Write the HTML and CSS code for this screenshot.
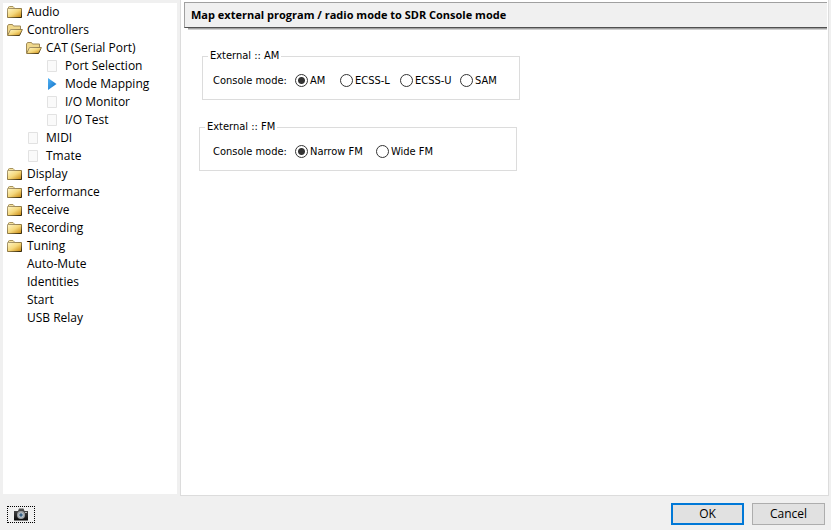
FILE: index.html
```
<!DOCTYPE html>
<html lang="en">
<head>
    <meta charset="UTF-8">
    <meta name="viewport" content="width=device-width, initial-scale=1.0">
    <title>Options</title>
    <link rel="stylesheet" href="styles.css">
</head>
<body>
    <!-- Shared icons -->
    <svg class="sprite" aria-hidden="true">
        <defs>
            <linearGradient id="gold" x1="0" y1="0" x2="1" y2="1">
                <stop offset="0" stop-color="#fff6c8"/>
                <stop offset="0.5" stop-color="#f5d87c"/>
                <stop offset="1" stop-color="#c8860c"/>
            </linearGradient>
            <linearGradient id="edge" x1="0" y1="0" x2="1" y2="1">
                <stop offset="0" stop-color="#b0a078"/>
                <stop offset="0.6" stop-color="#8a733c"/>
                <stop offset="1" stop-color="#2c2208"/>
            </linearGradient>
            <linearGradient id="arrow" x1="0" y1="0" x2="1" y2="1">
                <stop offset="0" stop-color="#55b4f5"/>
                <stop offset="1" stop-color="#0a6cc4"/>
            </linearGradient>
            <linearGradient id="body" x1="0" y1="0" x2="0" y2="1">
                <stop offset="0" stop-color="#555"/>
                <stop offset="1" stop-color="#080808"/>
            </linearGradient>
        </defs>
        <symbol id="folder" viewBox="0 0 16 16">
            <path d="M1.5 4.5V3L2.5 2.5H6L7 3.5V4.5" fill="#f6e3a0" stroke="#a8945f"/>
            <path d="M0.5 4.5H14.5V13.5H0.5Z" fill="url(#gold)" stroke="url(#edge)"/>
        </symbol>
        <symbol id="folder-open" viewBox="0 0 16 16">
            <path d="M0.5 13V4L1.5 2.5H5.5L6.5 4H13.5V7" fill="#f0d88c" stroke="#a08a58"/>
            <path d="M3.5 7.5H15.4L12.5 13.5H0.6Z" fill="url(#gold)" stroke="url(#edge)"/>
        </symbol>
        <symbol id="page" viewBox="0 0 16 16">
            <path d="M2.5 2.5H11.5V13.5H2.5Z" fill="#fafafa" stroke="#e2e2e2"/>
        </symbol>
        <symbol id="current" viewBox="0 0 16 16">
            <path d="M3 2L11.5 8L3 14Z" fill="url(#arrow)"/>
        </symbol>
        <symbol id="camera" viewBox="0 0 14 13">
            <path d="M0 3H4L5 0.5H9.5L10.5 3H14V12.5H0Z" fill="url(#body)"/>
            <circle cx="7" cy="7" r="4" fill="#9b9fa3"/>
            <circle cx="7" cy="7" r="2.6" fill="#c3ccd3"/>
            <circle cx="7" cy="7" r="1.7" fill="#3b6386"/>
            <path d="M11 4H13V5H11Z" fill="#bbb"/>
        </symbol>
    </svg>

    <div class="dialog">
        <nav class="sidebar">
            <ul class="tree">
                <li><a href="#"><svg class="icon"><use href="#folder"/></svg>Audio</a></li>
                <li>
                    <a href="#"><svg class="icon"><use href="#folder-open"/></svg>Controllers</a>
                    <ul>
                        <li>
                            <a href="#"><svg class="icon"><use href="#folder-open"/></svg>CAT (Serial Port)</a>
                            <ul>
                                <li><a href="#"><svg class="icon"><use href="#page"/></svg>Port Selection</a></li>
                                <li><a href="#" aria-current="page"><svg class="icon"><use href="#current"/></svg>Mode Mapping</a></li>
                                <li><a href="#"><svg class="icon"><use href="#page"/></svg>I/O Monitor</a></li>
                                <li><a href="#"><svg class="icon"><use href="#page"/></svg>I/O Test</a></li>
                            </ul>
                        </li>
                        <li><a href="#"><svg class="icon"><use href="#page"/></svg>MIDI</a></li>
                        <li><a href="#"><svg class="icon"><use href="#page"/></svg>Tmate</a></li>
                    </ul>
                </li>
                <li><a href="#"><svg class="icon"><use href="#folder"/></svg>Display</a></li>
                <li><a href="#"><svg class="icon"><use href="#folder"/></svg>Performance</a></li>
                <li><a href="#"><svg class="icon"><use href="#folder"/></svg>Receive</a></li>
                <li><a href="#"><svg class="icon"><use href="#folder"/></svg>Recording</a></li>
                <li><a href="#"><svg class="icon"><use href="#folder"/></svg>Tuning</a></li>
                <li><a href="#"><span class="icon"></span>Auto-Mute</a></li>
                <li><a href="#"><span class="icon"></span>Identities</a></li>
                <li><a href="#"><span class="icon"></span>Start</a></li>
                <li><a href="#"><span class="icon"></span>USB Relay</a></li>
            </ul>
        </nav>

        <main class="panel">
            <h1>Map external program / radio mode to SDR Console mode</h1>
            <form class="groups">
                <fieldset class="group group-am">
                    <legend>External :: AM</legend>
                    <div class="row">
                        <span class="row-label">Console mode:</span>
                        <div class="options options-am">
                            <label><input type="radio" name="am" checked>AM</label>
                            <label><input type="radio" name="am">ECSS-L</label>
                            <label><input type="radio" name="am">ECSS-U</label>
                            <label><input type="radio" name="am">SAM</label>
                        </div>
                    </div>
                </fieldset>
                <fieldset class="group group-fm">
                    <legend>External :: FM</legend>
                    <div class="row">
                        <span class="row-label">Console mode:</span>
                        <div class="options options-fm">
                            <label><input type="radio" name="fm" checked>Narrow FM</label>
                            <label><input type="radio" name="fm">Wide FM</label>
                        </div>
                    </div>
                </fieldset>
            </form>
        </main>

        <footer class="footer">
            <button type="button" class="snapshot" aria-label="Screenshot"><svg><use href="#camera"/></svg></button>
            <button type="button" class="button button-default">OK</button>
            <button type="button" class="button">Cancel</button>
        </footer>
    </div>
</body>
</html>
```
FILE: styles.css
```
:root {
    --face: #f0f0f0;
    --line: #dcdcdc;
    --accent: #0078d7;
}

* {
    box-sizing: border-box;
    margin: 0;
    padding: 0;
}

body {
    font-family: "Open Sans", "Noto Sans", sans-serif;
    font-size: 12px;
    color: #000;
    background-color: var(--face);
}

.sprite {
    position: absolute;
    width: 0;
    height: 0;
}

.dialog {
    display: grid;
    grid-template-columns: 174px 1fr;
    grid-template-rows: 1fr auto;
    column-gap: 3px;
    min-height: 100vh;
    padding: 0 2px 0 3px;
}

/* Tree */
.sidebar {
    margin: 3px 0 2px;
    background-color: #fff;
}

.tree {
    padding-left: 4px;
}

.tree ul {
    padding-left: 19px;
}

.tree li {
    list-style: none;
}

.tree a {
    display: flex;
    align-items: center;
    gap: 4px;
    height: 18px;
    color: #000;
    line-height: 16px;
    text-decoration: none;
    white-space: nowrap;
}

.icon {
    flex: none;
    width: 16px;
    height: 16px;
}

/* Settings page */
.panel {
    padding: 2px 1px 0 3px;
    background-color: #fff;
    border: 1px solid var(--line);
    border-top: none;
    font-family: "DejaVu Sans Condensed", sans-serif;
    font-size: 11px;
}

h1 {
    height: 26px;
    padding-left: 6px;
    background-color: var(--face);
    border: 1px solid #a0a0a0;
    border-right: none;
    border-bottom-color: #505050;
    box-shadow: 4px 1px 0 #a0a0a0, 4px 2px 0 #d0d0d0;
    clip-path: inset(0 0 -3px 0);
    font-family: "Open Sans", "Noto Sans", sans-serif;
    font-size: 11px;
    font-weight: 700;
    line-height: 24px;
    white-space: nowrap;
}

.groups {
    padding: 19px 15px;
}

.group {
    max-width: 318px;
    height: 53px;
    margin-bottom: 18px;
    padding: 0 10px;
    border: 1px solid var(--line);
}

.group-am {
    margin-left: 3px;
}

.group-fm {
    padding-left: 13px;
}

legend {
    margin-left: -5px;
    padding: 0 2px;
    line-height: 18px;
}

.group-fm legend {
    margin-left: -8px;
}

.row {
    display: flex;
    align-items: center;
    height: 30px;
}

.row-label {
    width: 82px;
    white-space: nowrap;
}

.options {
    display: grid;
}

.options-am {
    grid-template-columns: 45px 60px 60px auto;
}

.options-fm {
    grid-template-columns: 81px auto;
}

.options label {
    display: flex;
    align-items: center;
    gap: 2px;
    white-space: nowrap;
}

input[type="radio"] {
    appearance: none;
    flex: none;
    width: 13px;
    height: 13px;
    border: 1px solid #333;
    border-radius: 50%;
    background-color: #fff;
}

input[type="radio"]:checked {
    background-image: radial-gradient(circle, #333 3px, transparent 4px);
}

/* Footer */
.footer {
    grid-column: 1 / -1;
    display: flex;
    align-items: center;
    gap: 8px;
    padding: 7px 4px 5px;
}

.snapshot {
    display: flex;
    align-items: center;
    justify-content: center;
    width: 28px;
    height: 17px;
    margin-right: auto;
    background: none;
    border: 1px dotted #000;
}

.snapshot svg {
    width: 14px;
    height: 13px;
}

.button {
    width: 73px;
    height: 22px;
    background-color: #e1e1e1;
    border: 1px solid #adadad;
    font-family: inherit;
    font-size: 12px;
    line-height: 18px;
}

.button-default {
    border: 2px solid var(--accent);
}
```
